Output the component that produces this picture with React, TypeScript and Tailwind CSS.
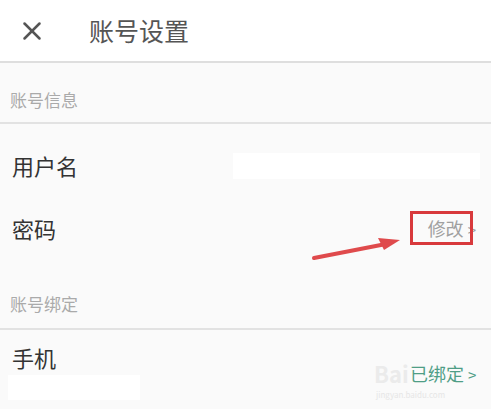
import { X } from "lucide-react";

const font = {
  fontFamily: '"Noto Sans CJK SC", "Noto Sans", sans-serif',
};

export default function App() {
  return (
    <div
      className="relative w-[491px] h-[409px] overflow-hidden bg-[#fafafa]"
      style={font}
    >
      {/* HEADER */}
      <div className="h-[63px] bg-white flex items-center border-b-2 border-[#dedede]">
        <X className="ml-[17px] size-[30px] text-[#555]" strokeWidth={2} />
        <div className="ml-[42px] text-[25px] text-[#555] leading-none">
          账号设置
        </div>
      </div>

      {/* 账号信息 */}
      <div className="h-[61px] pt-[14px] flex items-center px-[10px] text-[17px] text-[#aaa] border-b-2 border-[#e2e2e2]">
        账号信息
      </div>

      <div className="pt-[10px]">
        <div className="h-[63px] flex items-center pl-[12px]">
          <span className="text-[22px] text-[#333]">用户名</span>
          <div className="ml-auto mr-[11px] w-[247px] h-[26px] bg-white" />
        </div>
        <div className="h-[63px] flex items-center px-[12px]">
          <span className="text-[22px] text-[#333]">密码</span>
          <span className="ml-auto text-[18px] text-[#a0a0a0] mr-[3px]">
            修改 <span className="text-[15px]">&gt;</span>
          </span>
        </div>
      </div>

      {/* 账号绑定 */}
      <div className="h-[70px] pt-[20px] flex items-center px-[10px] text-[17px] text-[#aaa] border-b-2 border-[#e2e2e2]">
        账号绑定
      </div>

      <div className="h-[54px] flex items-center px-[12px]">
        <span className="text-[22px] text-[#333]">手机</span>
      </div>

      {/* redaction under phone */}
      <div className="absolute left-[8px] top-[375px] w-[132px] h-[25px] bg-white" />

      {/* watermark */}
      <div className="absolute left-[374px] top-[362px] text-[22px] font-bold text-[#ebebeb] leading-none">
        Bai
      </div>
      <div className="absolute left-[376px] top-[391px] text-[8px] text-[#e6e6e6] leading-none">
        jingyan.baidu.com
      </div>

      <span className="absolute left-[410px] top-[364px] text-[18px] leading-none text-[#4f9e86]">
        已绑定 <span className="text-[15px]">&gt;</span>
      </span>

      {/* annotation */}
      <div className="absolute left-[410px] top-[211px] w-[63px] h-[34px] border-[3px] border-[#d8393c]" />
      <svg
        className="absolute left-0 top-0"
        width="491"
        height="409"
        viewBox="0 0 491 409"
      >
        <line
          x1="314"
          y1="258"
          x2="386"
          y2="244"
          stroke="#df4a4c"
          strokeWidth="4"
          strokeLinecap="round"
        />
        <polygon points="400,240 378,238 384,250" fill="#df4a4c" />
      </svg>
    </div>
  );
}
